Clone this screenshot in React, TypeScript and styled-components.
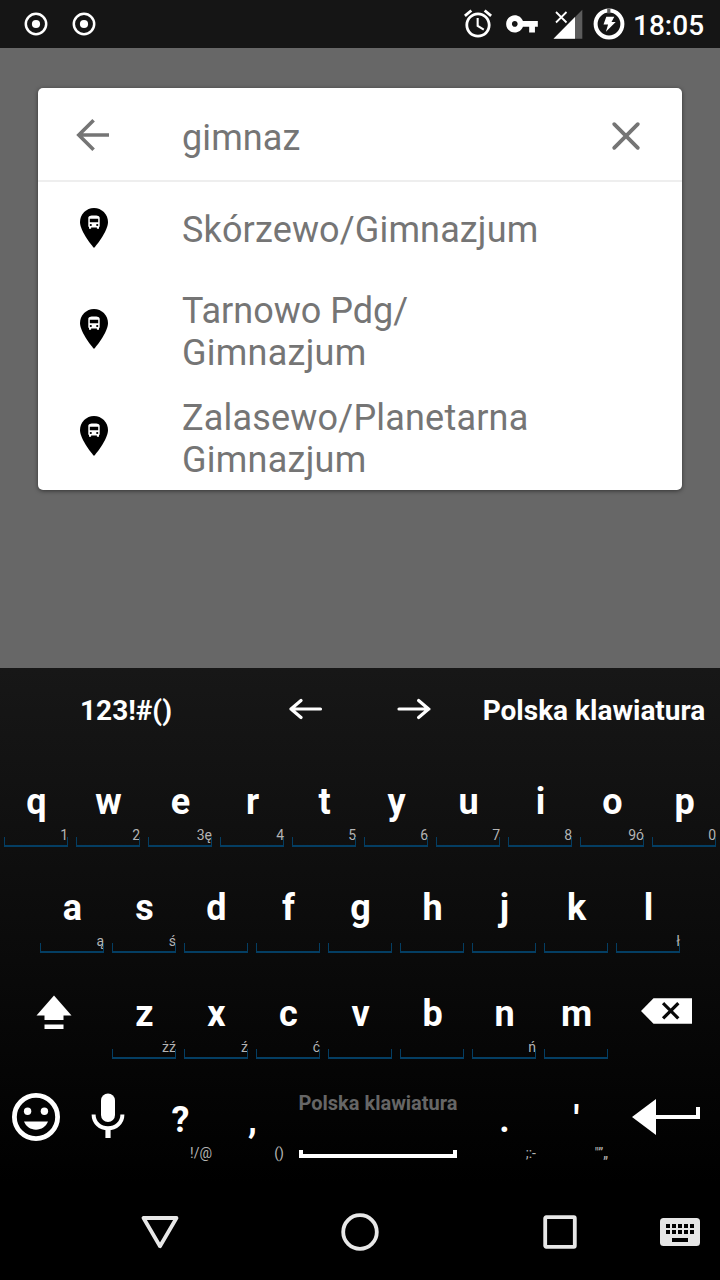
import React from "react";
import styled, { createGlobalStyle } from "styled-components";

const GlobalStyle = createGlobalStyle`
  * { box-sizing: border-box; }
  body { margin: 0; background: #676767; font-family: Roboto, "Liberation Sans", sans-serif; }
  svg { display: block; flex: none; }
`;

const Screen = styled.div`
  width: 720px;
  height: 1280px;
  display: flex;
  flex-direction: column;
  overflow: hidden;
  background: #676767;
`;

const StatusBar = styled.header`
  height: 48px;
  display: flex;
  align-items: center;
  justify-content: space-between;
  background: #151515;
  color: #fff;
`;

const Notifications = styled.div`
  display: flex;
  gap: 24px;
  padding-left: 24px;
`;

const SystemIcons = styled.div`
  display: flex;
  align-items: center;
  padding-right: 16px;
`;

const Clock = styled.span`
  width: 71px;
  padding-top: 3px;
  font-size: 28px;
  font-weight: 500;
  line-height: 34px;
  white-space: nowrap;
`;

const Content = styled.main`
  height: 620px;
  padding: 40px 38px 0;
`;

const SearchCard = styled.section`
  height: 402px;
  overflow: hidden;
  border-radius: 5px;
  background: #fff;
  color: #757575;
  font-size: 36px;
  line-height: 42px;
  box-shadow: 0 1px 4px rgba(0, 0, 0, 0.5);
`;

const SearchHeader = styled.div`
  height: 94px;
  display: flex;
  align-items: center;
  padding: 2px 38px 0 38px;
  border-bottom: 2px solid #eeeeee;
`;

const Query = styled.div`
  flex: 1;
  padding: 5px 0 0 72px;
  letter-spacing: 0.1px;
`;

const ResultRow = styled.div<{ $double?: boolean }>`
  height: ${(p) => (p.$double ? 107 : 96)}px;
  display: flex;
  align-items: flex-start;
  padding: ${(p) => (p.$double ? 12 : 27)}px 38px 0 42px;
`;

const ResultLine = styled.div<{ $tracking: number }>`
  letter-spacing: ${(p) => p.$tracking}px;
`;

const PinSlot = styled.div<{ $double?: boolean }>`
  width: 102px;
  padding-top: ${(p) => (p.$double ? 19 : 0)}px;
  margin-top: ${(p) => (p.$double ? 0 : -1)}px;
`;

const Keyboard = styled.section`
  height: 516px;
  background: linear-gradient(#171717, #000);
  color: #fff;
`;

const Toolbar = styled.div`
  height: 73px;
  display: grid;
  grid-template-columns: 252px 108px 108px 252px;
  font-size: 28px;
  font-weight: 700;
  line-height: 33px;
`;

const ToolKey = styled.div`
  display: flex;
  justify-content: center;
  padding-top: 26px;
  white-space: nowrap;
`;

const KeyRow = styled.div`
  height: 106px;
  display: flex;
  justify-content: center;
`;

const KeyCap = styled.div`
  width: 72px;
  padding: 40px 4px 0;
  text-align: center;
  text-indent: 1px;
  font-size: 36px;
  font-weight: 700;
  line-height: 42px;
`;

const Hint = styled.div<{ $bracket?: boolean }>`
  position: relative;
  height: 24px;
  text-align: right;
  font-size: 14px;
  font-weight: 400;
  line-height: 24px;
  color: #b4b4b4;
  &::after {
    content: "";
    display: ${(p) => (p.$bracket ? "block" : "none")};
    position: absolute;
    inset: auto 0 0 0;
    height: 8px;
    border: solid #043e63;
    border-width: 0 1px 2px;
  }
`;

const SpaceKey = styled.div`
  width: 180px;
  display: flex;
  flex-direction: column;
  align-items: center;
  padding-top: 32px;
  font-size: 20px;
  font-weight: 700;
  line-height: 24px;
  color: #666;
  white-space: nowrap;
`;

const SpaceMark = styled.div`
  width: 158px;
  height: 8px;
  margin-top: 35px;
  border: 4px solid #fff;
  border-top: 0;
`;

const NavBar = styled.nav`
  height: 96px;
  display: grid;
  grid-template-columns: 200px 200px 200px 60px;
  align-items: center;
  justify-items: center;
  padding-left: 60px;
  background: #000;
`;

const ImeSlot = styled.div`
  justify-self: start;
`;

const RecordIcon = () => (
  <svg width="24" height="24" viewBox="0 0 24 24" fill="none">
    <circle cx="12" cy="12" r="10.2" stroke="#fff" strokeWidth="2.5" />
    <circle cx="12" cy="12" r="4.1" fill="#fff" />
  </svg>
);

const StatusIcons = () => (
  <svg width="173" height="48" viewBox="460 0 173 48" fill="#fff">
    <g transform="translate(461.2 6.8) scale(1.4)">
      <path d="M22 5.72l-4.6-3.86-1.29 1.53 4.6 3.86L22 5.72zM7.88 3.39L6.6 1.86 2 5.71l1.29 1.53 4.59-3.85zM12.5 8H11v6l4.75 2.85.75-1.23-4-2.37V8zM12 4c-4.97 0-9 4.03-9 9s4.02 9 9 9c4.97 0 9-4.03 9-9s-4.03-9-9-9zm0 16c-3.87 0-7-3.13-7-7s3.13-7 7-7 7 3.13 7 7-3.13 7-7 7z" />
    </g>
    <g transform="translate(504.7 6.6) scale(1.44)">
      <path d="M12.65 10C11.83 7.67 9.61 6 7 6c-3.31 0-6 2.69-6 6s2.69 6 6 6c2.61 0 4.83-1.67 5.65-4H17v4h4v-4h2v-4H12.65zM7 14c-1.1 0-2-.9-2-2s.9-2 2-2 2 .9 2 2-.9 2-2 2z" />
    </g>
    <path d="M582.3 9.7V38.8H553.5z" fill="#5c5c5c" />
    <path d="M575 17V38.8H553.5z" />
    <path d="M556 12l10.5 10.5M566.5 12L556 22.5" stroke="#fff" strokeWidth="1.8" />
    <circle cx="609" cy="24" r="13.4" fill="none" stroke="#fff" strokeWidth="4" />
    <path d="M607.2 8.5h3.2v4.9h-3.2z" fill="#5a5a5a" />
    <path d="M606.3 16.8h8l-2.8 5.2h4.2l-9.8 9.8 2.2-7.4h-4.6z" />
  </svg>
);

const BackIcon = () => (
  <svg width="34" height="34" viewBox="0 0 34 34" fill="none" stroke="#757575" strokeWidth="3.6">
    <path d="M33 17H3M17.6 2.2L2.8 17l14.8 14.8" />
  </svg>
);

const ClearIcon = () => (
  <svg width="36" height="34" viewBox="0 0 36 34" fill="none" stroke="#757575" strokeWidth="3.8" strokeLinecap="round">
    <path d="M6.2 6.2l23.6 23.6M29.8 6.2L6.2 29.8" />
  </svg>
);

const BusPin = () => (
  <svg width="28" height="40" viewBox="0 0 28 40">
    <path d="M14 0C6.3 0 0 6.3 0 14c0 10 14 26 14 26s14-16 14-26C28 6.300 21.700 0 14 0z" fill="#000" />
    <path
      fillRule="evenodd"
      fill="#fff"
      d="M8.300 10c0-2.200 2.200-2.600 5.700-2.600s5.700.4 5.700 2.600v8.800h-.7v1.900h-2.100v-1.300h-5.800v1.300H9v-1.900h-.7zM9.800 10.800v3.500h8.400v-3.500zM10.800 15.900a1.100 1.100 0 1 0 .01 2.200 1.100 1.100 0 0 0 0-2.200zM17.200 15.900a1.100 1.100 0 1 0 .01 2.200 1.100 1.100 0 0 0 0-2.200z"
    />
  </svg>
);

const ArrowIcon = ({ right = false }: { right?: boolean }) => (
  <svg width="34" height="30" viewBox="0 0 34 30" fill="none" stroke="#fff" strokeWidth="3.2" strokeLinecap="round" strokeLinejoin="round">
    <path d={right ? "M2 15h30M21.600 6.500L31.600 15l-10 8.500" : "M31.500 15H2M12 6.500L2 15l10 8.500"} />
  </svg>
);

const ShiftIcon = () => (
  <svg width="108" height="106" viewBox="0 0 108 106" fill="#fff">
    <path d="M54 42.500l17.500 20H63.500V67h-19v-4.500H36.500zM44.500 71.500h19v4.600h-19z" />
  </svg>
);

const DeleteIcon = () => (
  <svg width="108" height="106" viewBox="0 0 108 106">
    <path d="M29 58l12.500-12.700H80v25.400H41.500z" fill="#fff" />
    <path d="M52.200 51.300l13 13M65.200 51.300l-13 13" stroke="#080808" strokeWidth="3.200" strokeLinecap="square" />
  </svg>
);

const EmojiIcon = () => (
  <svg width="72" height="106" viewBox="0 0 72 106" fill="#fff">
    <circle cx="36" cy="58" r="21.600" fill="none" stroke="#fff" strokeWidth="4.800" />
    <circle cx="27.600" cy="52.200" r="3.700" />
    <circle cx="44.400" cy="52.200" r="3.700" />
    <path d="M24 62.600h24c-2 5-6.500 8.200-12 8.200s-10-3.200-12-8.200z" />
  </svg>
);

const MicIcon = () => (
  <svg width="72" height="106" viewBox="0 0 72 106" fill="#fff">
    <rect x="29" y="34.500" width="14" height="28.500" rx="7" />
    <path d="M21.600 55.500c0 8.200 6.500 13.700 14.400 13.700S50.400 63.700 50.400 55.500" fill="none" stroke="#fff" strokeWidth="4" />
    <path d="M33.400 68h5.200v11h-5.200z" />
  </svg>
);

const EnterIcon = () => (
  <svg width="108" height="106" viewBox="0 0 108 106" fill="#fff">
    <path d="M20 58l24-18v16h40v-8h4v12H44v16z" />
  </svg>
);

const NavDown = () => (
  <svg width="40" height="40" viewBox="0 0 40 40" fill="none">
    <path d="M3.500 6h33L20 34.200z" stroke="#e8e8e8" strokeWidth="3.800" strokeLinejoin="round" />
  </svg>
);

const NavHome = () => (
  <svg width="40" height="40" viewBox="0 0 40 40" fill="none">
    <circle cx="20" cy="20" r="16.800" stroke="#e8e8e8" strokeWidth="3.800" />
  </svg>
);

const NavRecent = () => (
  <svg width="40" height="40" viewBox="0 0 40 40" fill="none">
    <rect x="5.200" y="5.200" width="29.600" height="29.600" rx="1" stroke="#e8e8e8" strokeWidth="3.800" />
  </svg>
);

const ImeIcon = () => (
  <svg width="40" height="28" viewBox="0 0 40 28">
    <rect width="40" height="28" rx="3.500" fill="#e5e5e5" />
    {[6, 12, 18, 24, 30].map((x) => (
      <path key={x} d={`M${x} 6h4v4h-4zM${x} 12h4v4h-4z`} fill="#000" />
    ))}
    <path d="M12 20h16v4H12z" fill="#000" />
  </svg>
);

type KeyData = [label: string, hint?: string];

const topRow: KeyData[] = [["q", "1"], ["w", "2"], ["e", "3ę"], ["r", "4"], ["t", "5"], ["y", "6"], ["u", "7"], ["i", "8"], ["o", "9ó"], ["p", "0"]];
const homeRow: KeyData[] = [["a", "ą"], ["s", "ś"], ["d"], ["f"], ["g"], ["h"], ["j"], ["k"], ["l", "ł"]];
const lowerRow: KeyData[] = [["z", "żź"], ["x", "ź"], ["c", "ć"], ["v"], ["b"], ["n", "ń"], ["m"]];

const Key = ({ data: [label, hint], bracket = true }: { data: KeyData; bracket?: boolean }) => (
  <KeyCap>
    {label}
    <Hint $bracket={bracket}>{hint}</Hint>
  </KeyCap>
);

const keys = (row: KeyData[]) => row.map((k) => <Key key={k[0]} data={k} />);

type ResultText = { text: string; tracking: number };

const results: ResultText[][] = [
  [{ text: "Skórzewo/Gimnazjum", tracking: 0.15 }],
  [
    { text: "Tarnowo Pdg/", tracking: 0 },
    { text: "Gimnazjum", tracking: 0.25 },
  ],
  [
    { text: "Zalasewo/Planetarna", tracking: 0.2 },
    { text: "Gimnazjum", tracking: 0.25 },
  ],
];

export default function App() {
  return (
    <>
      <GlobalStyle />
      <Screen>
        <StatusBar>
          <Notifications>
            <RecordIcon />
            <RecordIcon />
          </Notifications>
          <SystemIcons>
            <StatusIcons />
            <Clock>18:05</Clock>
          </SystemIcons>
        </StatusBar>
        <Content>
          <SearchCard>
            <SearchHeader>
              <BackIcon />
              <Query>gimnaz</Query>
              <ClearIcon />
            </SearchHeader>
            {results.map((lines) => (
              <ResultRow key={lines[0].text} $double={lines.length > 1}>
                <PinSlot $double={lines.length > 1}>
                  <BusPin />
                </PinSlot>
                <div>
                  {lines.map(({ text, tracking }) => (
                    <ResultLine key={text} $tracking={tracking}>
                      {text}
                    </ResultLine>
                  ))}
                </div>
              </ResultRow>
            ))}
          </SearchCard>
        </Content>
        <Keyboard>
          <Toolbar>
            <ToolKey>123!#()</ToolKey>
            <ToolKey>
              <ArrowIcon />
            </ToolKey>
            <ToolKey>
              <ArrowIcon right />
            </ToolKey>
            <ToolKey>Polska klawiatura</ToolKey>
          </Toolbar>
          <KeyRow>{keys(topRow)}</KeyRow>
          <KeyRow>{keys(homeRow)}</KeyRow>
          <KeyRow>
            <ShiftIcon />
            {keys(lowerRow)}
            <DeleteIcon />
          </KeyRow>
          <KeyRow>
            <EmojiIcon />
            <MicIcon />
            <Key data={["?", "!/@"]} bracket={false} />
            <Key data={[",", "()"]} bracket={false} />
            <SpaceKey>
              Polska klawiatura
              <SpaceMark />
            </SpaceKey>
            <Key data={[".", ";:-"]} bracket={false} />
            <Key data={["'", "\"”„"]} bracket={false} />
            <EnterIcon />
          </KeyRow>
        </Keyboard>
        <NavBar>
          <NavDown />
          <NavHome />
          <NavRecent />
          <ImeSlot>
            <ImeIcon />
          </ImeSlot>
        </NavBar>
      </Screen>
    </>
  );
}
